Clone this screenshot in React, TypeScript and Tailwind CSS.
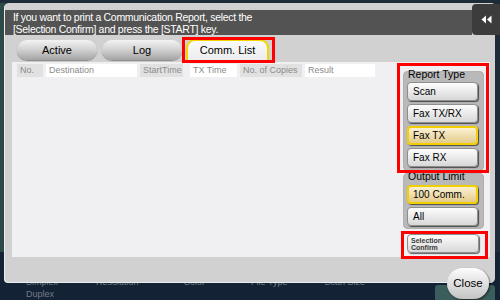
import React from "react";

type BtnProps = { label: React.ReactNode; selected?: boolean };

// botón del panel derecho (gris normal, amarillo si está seleccionado)
const SideButton: React.FC<BtnProps> = ({ label, selected }) => (
  <div
    className={
      selected
        ? "h-[19px] w-[71px] rounded-[4px] border-2 border-[#f2d000] bg-linear-to-b from-[#fbf1d2] to-[#e4cb8c] pl-[4px] text-[10px] leading-[15px] text-black shadow-[1px_1px_1px_rgba(0,0,0,0.6)]"
        : "h-[19px] w-[71px] rounded-[4px] border border-[#8e8e8e] bg-linear-to-b from-[#fdfdfd] to-[#d8d8d8] pl-[5px] text-[10px] leading-[17px] text-black shadow-[1px_1px_1px_rgba(0,0,0,0.6)]"
    }
  >
    {label}
  </div>
);

const columns = [
  { label: "No.", w: "w-[26px]", ml: "ml-0", bg: "bg-[#e1e1e1]" },
  { label: "Destination", w: "w-[91px]", ml: "ml-[3px]", bg: "bg-white" },
  { label: "StartTime", w: "w-[43px]", ml: "ml-[3px]", bg: "bg-[#e1e1e1]" },
  { label: "TX Time", w: "w-[47px]", ml: "ml-[7px]", bg: "bg-white" },
  { label: "No. of Copies", w: "w-[62px]", ml: "ml-[3px]", bg: "bg-[#e1e1e1]" },
  { label: "Result", w: "w-[70px]", ml: "ml-[3px]", bg: "bg-white" },
];

export default function App() {
  return (
    <div className="relative h-[300px] w-[500px] overflow-hidden bg-[#142235] font-['Liberation_Sans',Arial,sans-serif]">
      {/* pantalla de fondo */}
      <div className="flex h-[252px] bg-[#1d2c38] pt-[3px]">
        <div className="w-[8px] bg-[#2b4a48]" />
      </div>
      <div className="flex h-[48px] text-[9px] leading-[11px] text-[#737c88]">
        <div className="flex flex-col pl-[26px] pt-[25px]">
          <span>Simplex</span>
          <span className="mt-[1px]">Duplex</span>
        </div>
        <span className="ml-[38px] pt-[25px]">Resolution</span>
        <span className="ml-[45px] pt-[25px]">Color</span>
        <span className="ml-[46px] pt-[25px]">File Type</span>
        <span className="ml-[37px] pt-[25px]">Scan Size</span>
        <div className="ml-auto mr-[5px] mt-[33px] h-[20px] w-[60px] rounded-[3px] bg-[#3b5d5b]" />
      </div>

      {/* diálogo */}
      <div className="absolute left-[5px] top-[3px] flex h-[279px] w-[490px] flex-col rounded-[4px] bg-[#d1d1d1] pt-[7px] shadow-[-1px_1px_0_#ececec]">
        <div className="h-[25px] w-[467px] bg-[#535353] pl-[8px] pt-[1px] text-[10.5px] leading-[12px] tracking-[-0.3px] text-white">
          <p>If you want to print a Communication Report, select the</p>
          <p>[Selection Confirm] and press the [START] key.</p>
        </div>

        {/* pestañas */}
        <div className="mt-[5px] flex h-[22px] items-start pl-[12px]">
          <div className="flex h-[20px] w-[80px] items-center justify-center rounded-full bg-linear-to-b from-[#f4f4f4] via-[#d0d0d0] to-[#a4a4a4] text-[11px] text-black shadow-[0_1px_1px_rgba(0,0,0,0.35)]">
            Active
          </div>
          <div className="ml-[5px] flex h-[20px] w-[80px] items-center justify-center rounded-full bg-linear-to-b from-[#f4f4f4] via-[#d0d0d0] to-[#a4a4a4] text-[11px] text-black shadow-[0_1px_1px_rgba(0,0,0,0.35)]">
            Log
          </div>
          <div className="ml-[4px] flex h-[22px] w-[83px] -mt-[1px] items-center justify-center rounded-t-[9px] border-x-2 border-t-2 border-[#f3d500] bg-linear-to-b from-[#fafafa] to-[#ececec] pb-[1px] text-[11px] text-black">
            Comm. List
          </div>
        </div>

        {/* contenido */}
        <div className="ml-[7px] flex h-[195px] w-[478px] bg-[#f0eff1]">
          <div className="w-[391px] pl-[5px] pt-[2px]">
            <div className="flex h-[13px]">
              {columns.map((c) => (
                <div
                  key={c.label}
                  className={`${c.w} ${c.ml} ${c.bg} pl-[3px] text-[9px] leading-[13px] text-[#8b8b8b] whitespace-nowrap`}
                >
                  {c.label}
                </div>
              ))}
            </div>
          </div>

          <div className="flex w-[81px] flex-col pt-[9px]">
            <div className="flex h-[100px] flex-col gap-[3px] rounded-[5px] bg-[#b9b9b9] pl-[4px] shadow-[inset_0_0_1px_rgba(0,0,0,0.4)]">
              <div className="-mb-[3px] h-[11px] pl-[1px] text-[10.5px] leading-[7px] text-black">Report Type</div>
              <SideButton label="Scan" />
              <SideButton label="Fax TX/RX" />
              <SideButton label="Fax TX" selected />
              <SideButton label="Fax RX" />
            </div>
            <div className="mt-[2px] flex h-[56px] flex-col gap-[3px] rounded-[5px] bg-[#b9b9b9] pl-[4px] shadow-[inset_0_0_1px_rgba(0,0,0,0.4)]">
              <div className="-mb-[2px] h-[11px] pl-[1px] text-[10.5px] leading-[7px] text-black">Output Limit</div>
              <SideButton label="100 Comm." selected />
              <SideButton label="All" />
            </div>
            <div className="ml-[4px] mt-[5px] flex h-[19px] w-[72px] flex-col justify-center rounded-[4px] border border-[#8e8e8e] bg-linear-to-b from-[#fdfdfd] to-[#d8d8d8] pl-[3px] text-[7px] font-bold leading-[7px] text-[#3a3a3a] shadow-[1px_1px_1px_rgba(0,0,0,0.6)]">
              <span>Selection</span>
              <span>Confirm</span>
            </div>
          </div>
        </div>
      </div>

      {/* botón atrás */}
      <div className="absolute left-[472px] top-[4px] flex h-[31px] w-[28px] items-center justify-center rounded-l-[4px] bg-[#3c3c3c]">
        <svg width="11" height="9" viewBox="0 0 11 9">
          <path d="M5 0.5 L0.5 4.5 L5 8.5 Z M10.5 0.5 L6 4.5 L10.5 8.5 Z" fill="#ffffff" />
        </svg>
      </div>

      {/* botón cerrar */}
      <div className="absolute left-[447px] top-[268px] flex h-[31px] w-[42px] items-center justify-center rounded-full bg-linear-to-b from-[#fdfdfd] to-[#c4c4c4] text-[11.5px] text-black shadow-[1px_1px_2px_rgba(0,0,0,0.6)]">
        Close
      </div>

      {/* marcos rojos de anotación */}
      <div className="absolute left-[182px] top-[37px] h-[26px] w-[93px] border-[3px] border-[#ff0000]" />
      <div className="absolute left-[397px] top-[63px] h-[110px] w-[92px] border-[3px] border-[#ff0000]" />
      <div className="absolute left-[401px] top-[231px] h-[28px] w-[87px] border-[3px] border-[#ff0000]" />
    </div>
  );
}
